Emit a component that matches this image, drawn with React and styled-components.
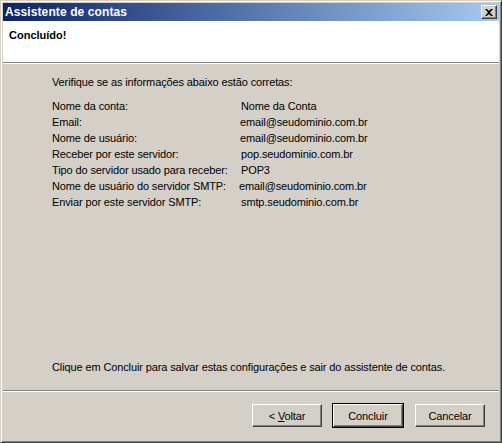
import React from 'react';
import styled, { createGlobalStyle } from 'styled-components';

const GlobalStyle = createGlobalStyle`
    html, body {
        margin: 0;
        padding: 0;
        background: #D4D0C8;
    }
    body {
        font-family: "Liberation Sans", Arial, sans-serif;
        font-size: 11px;
        letter-spacing: -0.12px;
        color: #000000;
    }
`;

const rows = [
    ['Nome da conta:', 'Nome da Conta', 0],
    ['Email:', 'email@seudominio.com.br', -1],
    ['Nome de usuário:', 'email@seudominio.com.br', -1],
    ['Receber por este servidor:', 'pop.seudominio.com.br', 0],
    ['Tipo do servidor usado para receber:', 'POP3', 0],
    ['Nome de usuário do servidor SMTP:', 'email@seudominio.com.br', -2],
    ['Enviar por este servidor SMTP:', 'smtp.seudominio.com.br', 0],
];

export default function App() {
    return (
        <>
            <GlobalStyle />
            <Window>
                <TitleBar>
                    <TitleText>Assistente de contas</TitleText>
                    <CloseButton>
                        <svg width="8" height="7" viewBox="0 0 8 7">
                            <path d="M0 0h2l2 2 2-2h2L5 3.5 8 7H6L4 5 2 7H0l3-3.5z" fill="#000" />
                        </svg>
                    </CloseButton>
                </TitleBar>
                <Header>
                    <HeaderTitle>Concluído!</HeaderTitle>
                </Header>
                <Body>
                    <Intro>Verifique se as informações abaixo estão corretas:</Intro>
                    <Summary>
                        {rows.map(([label, value, shift]) => (
                            <Row key={label}>
                                <Label>{label}</Label>
                                <Value $shift={shift}>{value}</Value>
                            </Row>
                        ))}
                    </Summary>
                    <Spacer />
                    <Footnote>Clique em Concluir para salvar estas configurações e sair do assistente de contas.</Footnote>
                </Body>
                <ButtonBar>
                    <Button>&lt; <u>V</u>oltar</Button>
                    <Button $default>Concluir</Button>
                    <Button $gap>Cancelar</Button>
                </ButtonBar>
            </Window>
        </>
    );
}

const Window = styled.div`
    width: 502px;
    height: 443px;
    box-sizing: border-box;
    display: flex;
    flex-direction: column;
    background: #D4D0C8;
    border-top: 1px solid #D4D0C8;
    border-left: 1px solid #D4D0C8;
    border-right: 1px solid #404040;
    border-bottom: 1px solid #404040;
    box-shadow: inset 1px 1px 0 #FFFFFF, inset -1px -1px 0 #808080;
    padding: 2px;
`;

const TitleBar = styled.div`
    height: 18px;
    display: flex;
    align-items: center;
    justify-content: space-between;
    padding: 0 2px 0 2px;
    background: linear-gradient(to right, #0A246A, #A6CAF0);
`;

const TitleText = styled.span`
    color: #FFFFFF;
    font-weight: bold;
    font-size: 12px;
    letter-spacing: 0.1px;
`;

const CloseButton = styled.div`
    width: 16px;
    height: 14px;
    box-sizing: border-box;
    display: flex;
    align-items: center;
    justify-content: center;
    background: #D4D0C8;
    border-top: 1px solid #FFFFFF;
    border-left: 1px solid #FFFFFF;
    border-right: 1px solid #404040;
    border-bottom: 1px solid #404040;
    box-shadow: inset -1px -1px 0 #808080;
`;

const Header = styled.div`
    height: 42px;
    background: #FFFFFF;
    padding: 8px 0 0 6px;
    box-sizing: border-box;
    border-bottom: 1px solid #808080;
    box-shadow: 0 1px 0 #FFFFFF;
`;

const HeaderTitle = styled.div`
    font-weight: bold;
    font-size: 11px;
    letter-spacing: 0;
`;

const Body = styled.div`
    flex: 1;
    display: flex;
    flex-direction: column;
    padding: 11px 0 0 49px;
    border-bottom: 1px solid #808080;
    box-shadow: 0 1px 0 #FFFFFF;
`;

const Intro = styled.div`
    line-height: 16px;
    margin-bottom: 8px;
`;

const Summary = styled.div`
    display: flex;
    flex-direction: column;
`;

const Row = styled.div`
    display: grid;
    grid-template-columns: 189px auto;
    line-height: 16px;
`;

const Label = styled.span``;

const Value = styled.span`
    margin-left: ${p => p.$shift}px;
`;

const Spacer = styled.div`
    flex: 1;
`;

const Footnote = styled.div`
    line-height: 16px;
    margin-bottom: 15px;
`;

const ButtonBar = styled.div`
    height: 49px;
    display: flex;
    align-items: center;
    justify-content: flex-end;
    padding: 0 14px 0 0;
    gap: 11px;
`;

const Button = styled.button`
    width: 70px;
    height: 23px;
    box-sizing: border-box;
    padding: 0;
    font-family: "Liberation Sans", Arial, sans-serif;
    font-size: 11px;
    letter-spacing: -0.12px;
    color: #000000;
    background: #D4D0C8;
    border-top: 1px solid #FFFFFF;
    border-left: 1px solid #FFFFFF;
    border-right: 1px solid #404040;
    border-bottom: 1px solid #404040;
    box-shadow: inset -1px -1px 0 #808080;
    outline: ${p => (p.$default ? '1px solid #000000' : 'none')};
    margin-left: ${p => (p.$gap ? '1px' : '0')};
`;
